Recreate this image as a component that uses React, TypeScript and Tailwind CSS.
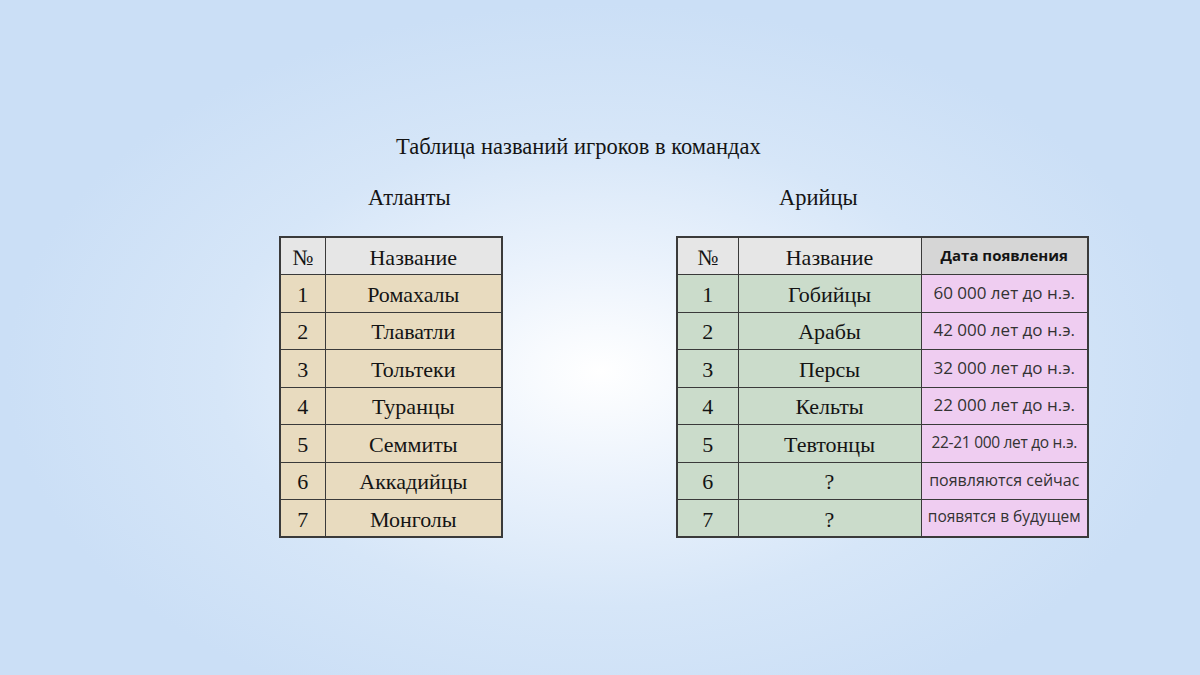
const atlanty = ['Ромахалы', 'Тлаватли', 'Тольтеки', 'Туранцы', 'Семмиты', 'Аккадийцы', 'Монголы']

const ariitsy = [
  { name: 'Гобийцы', date: '60 000 лет до н.э.', size: 'text-[17px]' },
  { name: 'Арабы', date: '42 000 лет до н.э.', size: 'text-[17px]' },
  { name: 'Персы', date: '32 000 лет до н.э.', size: 'text-[17px]' },
  { name: 'Кельты', date: '22 000 лет до н.э.', size: 'text-[17px]' },
  { name: 'Тевтонцы', date: '22-21 000 лет до н.э.', size: 'text-[15.5px] tracking-[-0.3px]' },
  { name: '?', date: 'появляются сейчас', size: 'text-[16px]' },
  { name: '?', date: 'появятся в будущем', size: 'text-[15.5px]' },
]

const serif = "font-['Liberation_Serif','DejaVu_Serif',serif]"
const sans = "font-['Open_Sans','Noto_Sans',sans-serif]"

export default function App() {
  return (
    <div
      className={`h-[675px] w-[1200px] overflow-hidden bg-[radial-gradient(ellipse_at_50%_55%,#ffffff_0%,#eaf2fc_22%,#d6e6f8_45%,#cbdff6_70%)] text-[#141414] ${serif}`}
    >
      {/* Заголовок */}
      <div className="pt-[132px] pl-[396px] text-[22.5px] leading-[30px]">
        Таблица названий игроков в командах
      </div>

      {/* Названия команд */}
      <div className="mt-[21px] flex text-[22.5px] leading-[30px]">
        <div className="ml-[368px] w-[84px]">Атланты</div>
        <div className="ml-[327px]">Арийцы</div>
      </div>

      {/* Таблицы */}
      <div className="mt-[23px] flex items-start pl-[279px]">
        <table className="border-collapse border-2 border-[#3a3a3a] text-[22px]">
          <thead>
            <tr className="h-[37px] bg-[#e6e6e6]">
              <th className="w-[45px] border border-[#3a3a3a] pt-[3px] font-normal">№</th>
              <th className="w-[177px] border border-[#3a3a3a] pt-[3px] font-normal">Название</th>
            </tr>
          </thead>
          <tbody>
            {atlanty.map((name, i) => (
              <tr key={name} className="h-[37.5px] bg-[#e8dbbf]">
                <td className="border border-[#3a3a3a] pt-[2px] text-center">{i + 1}</td>
                <td className="border border-[#3a3a3a] pt-[2px] text-center">{name}</td>
              </tr>
            ))}
          </tbody>
        </table>

        <table className="ml-[173px] border-collapse border-2 border-[#3a3a3a] text-[22px]">
          <thead>
            <tr className="h-[37px]">
              <th className="w-[61px] border border-[#3a3a3a] bg-[#e6e6e6] pt-[3px] font-normal">№</th>
              <th className="w-[183px] border border-[#3a3a3a] bg-[#e6e6e6] pt-[3px] font-normal">Название</th>
              <th className={`w-[167px] border border-[#3a3a3a] bg-[#d6d6d6] pb-[2px] text-[15px] font-bold ${sans}`}>
                Дата появления
              </th>
            </tr>
          </thead>
          <tbody>
            {ariitsy.map((row, i) => (
              <tr key={i} className="h-[37.5px]">
                <td className="border border-[#3a3a3a] bg-[#cbdccb] pt-[2px] text-center">{i + 1}</td>
                <td className="border border-[#3a3a3a] bg-[#cbdccb] pt-[2px] text-center">{row.name}</td>
                <td
                  className={`whitespace-nowrap border border-[#3a3a3a] bg-[#efcdf1] pb-[2px] text-center text-[#333] ${sans} ${row.size}`}
                >
                  {row.date}
                </td>
              </tr>
            ))}
          </tbody>
        </table>
      </div>
    </div>
  )
}
